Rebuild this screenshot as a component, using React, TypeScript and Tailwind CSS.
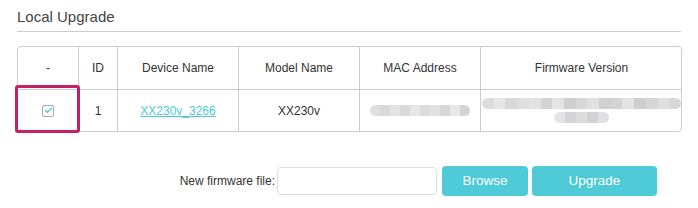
import { Check } from 'lucide-react';

const cols = 'grid grid-cols-[61px_39px_121px_121px_121px_201px]';

// pixelated grey blocks standing in for blurred-out values
const macBlocks = ['#dedede', '#d9d9d9', '#e4e4e4', '#dadada', '#e6e6e6', '#dcdcdc', '#e2e2e2', '#d6d6d6', '#e8e8e8', '#d3d3d6'];
const fwLine1 = ['#dcdcdc', '#e6e6e6', '#d8d8d8', '#dedede', '#e2e2e2', '#d4d4d4', '#e4e4e4', '#cfcfd2', '#d8d8d8', '#e0e0e0', '#cdd1d6', '#d6d2d0', '#e2e4e4', '#cfcfd2', '#d6d6d6', '#e0e0e0', '#d8d8d8'];
const fwLine2 = ['#e4e4e4', '#d4d4d8', '#dcdcdc', '#d2d2d6', '#e0e0e0'];

function Blur({ blocks, width }: { blocks: string[]; width: number }) {
    return (
        <div className="flex h-[11px] rounded-full overflow-hidden blur-[0.6px]" style={{ width }}>
            {blocks.map((c, i) => (
                <div key={i} className="flex-1 h-full" style={{ backgroundColor: c }} />
            ))}
        </div>
    );
}

function App() {
    return (
        <div className="w-[698px] h-[208px] bg-white px-[17px] font-['Liberation_Sans',Arial,sans-serif] text-[#333]">
            {/* Title */}
            <div className="pt-[7px] pb-[4px] border-b border-[#cccccc] text-[15px] leading-[20px] text-[#444]">
                Local Upgrade
            </div>

            {/* Device table */}
            <div className="relative mt-[14px] w-[665px] border border-[#cccccc] rounded-[4px] text-[12px] leading-[14px]">
                <div className={`${cols} h-[42px]`}>
                    <div className="flex items-center justify-center border-r border-[#cccccc]">-</div>
                    <div className="flex items-center justify-center border-r border-[#cccccc]">ID</div>
                    <div className="flex items-center justify-center border-r border-[#cccccc]">Device Name</div>
                    <div className="flex items-center justify-center border-r border-[#cccccc]">Model Name</div>
                    <div className="flex items-center justify-center border-r border-[#cccccc]">MAC Address</div>
                    <div className="flex items-center justify-center">Firmware Version</div>
                </div>
                <div className={`${cols} h-[42px] border-t border-[#cccccc]`}>
                    <div className="flex items-center justify-center border-r border-[#cccccc]">
                        <div className="w-[12px] h-[12px] border border-[#a9a9a9] rounded-[2px] bg-white flex items-center justify-center">
                            <Check size={9} strokeWidth={3.5} className="text-[#4acbd6]" />
                        </div>
                    </div>
                    <div className="flex items-center justify-center border-r border-[#cccccc]">1</div>
                    <div className="flex items-center justify-center border-r border-[#cccccc]">
                        <a href="#" className="text-[#4acbd6] underline">XX230v_3266</a>
                    </div>
                    <div className="flex items-center justify-center border-r border-[#cccccc]">XX230v</div>
                    <div className="flex items-center justify-center border-r border-[#cccccc]">
                        <Blur blocks={macBlocks} width={100} />
                    </div>
                    <div className="flex flex-col items-center justify-center gap-[3px]">
                        <Blur blocks={fwLine1} width={199} />
                        <Blur blocks={fwLine2} width={55} />
                    </div>
                </div>

                {/* highlight around the selected checkbox */}
                <div className="absolute left-[-3px] top-[38px] w-[65px] h-[48px] border-[3px] border-[#c51f67] rounded-[3px]" />
            </div>

            {/* Upload row */}
            <div className="flex items-center justify-end mt-[34px] pr-[24px]">
                <span className="text-[12px] text-[#333] mr-[2px]">New firmware file:</span>
                <input type="text" className="w-[160px] h-[28px] border border-[#dddddd] rounded-[4px] outline-none px-2" />
                <button className="ml-[5px] w-[86px] h-[30px] bg-[#4ecbd6] rounded-[4px] text-white text-[13.5px]">Browse</button>
                <button className="ml-[4px] w-[125px] h-[30px] bg-[#4ecbd6] rounded-[4px] text-white text-[13.5px]">Upgrade</button>
            </div>
        </div>
    );
}

export default App;
